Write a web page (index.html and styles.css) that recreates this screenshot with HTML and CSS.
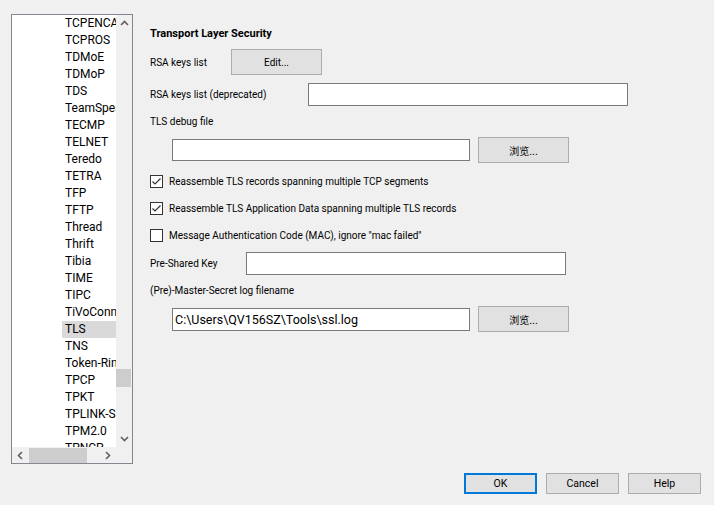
FILE: index.html
```html
<!DOCTYPE html>
<html>
<head>
<meta charset="utf-8">
<link rel="stylesheet" href="styles.css">
</head>
<body>
<div class="page">
  <div class="main">
    <div class="tree">
      <div class="tree-top">
        <div class="list">
          <div class="item">TCPENCAP</div>
          <div class="item">TCPROS</div>
          <div class="item">TDMoE</div>
          <div class="item">TDMoP</div>
          <div class="item">TDS</div>
          <div class="item">TeamSpeak2</div>
          <div class="item">TECMP</div>
          <div class="item">TELNET</div>
          <div class="item">Teredo</div>
          <div class="item">TETRA</div>
          <div class="item">TFP</div>
          <div class="item">TFTP</div>
          <div class="item">Thread</div>
          <div class="item">Thrift</div>
          <div class="item">Tibia</div>
          <div class="item">TIME</div>
          <div class="item">TIPC</div>
          <div class="item">TiVoConnect</div>
          <div class="item selected">TLS</div>
          <div class="item">TNS</div>
          <div class="item">Token-Ring</div>
          <div class="item">TPCP</div>
          <div class="item">TPKT</div>
          <div class="item">TPLINK-SMARTHOME</div>
          <div class="item">TPM2.0</div>
          <div class="item">TPNCP</div>
        </div>
        <div class="vscroll">
          <div class="sbtn"><svg width="9" height="6" viewBox="0 0 9 6"><polyline points="1,5 4.5,1.5 8,5" fill="none" stroke="#606060" stroke-width="1.6"/></svg></div>
          <div class="vtrack"><div class="vthumb"></div></div>
          <div class="sbtn"><svg width="9" height="6" viewBox="0 0 9 6"><polyline points="1,1 4.5,4.5 8,1" fill="none" stroke="#606060" stroke-width="1.6"/></svg></div>
        </div>
      </div>
      <div class="tree-bottom">
        <div class="hscroll">
          <div class="sbtn"><svg width="6" height="9" viewBox="0 0 6 9"><polyline points="5,1 1.5,4.5 5,8" fill="none" stroke="#606060" stroke-width="1.6"/></svg></div>
          <div class="htrack"><div class="hthumb"></div></div>
          <div class="sbtn"><svg width="6" height="9" viewBox="0 0 6 9"><polyline points="1,1 4.5,4.5 1,8" fill="none" stroke="#606060" stroke-width="1.6"/></svg></div>
        </div>
        <div class="corner"></div>
      </div>
    </div>

    <div class="panel">
      <div class="title">Transport Layer Security</div>
      <div class="row r-rsa">
        <span class="lbl w-rsa">RSA keys list</span>
        <button class="btn b-edit">Edit...</button>
      </div>
      <div class="row r-dep">
        <span class="lbl w-dep">RSA keys list (deprecated)</span>
        <div class="input i-wide"></div>
      </div>
      <div class="lbl-row r-dbg-l">TLS debug file</div>
      <div class="row r-file r-dbg">
        <div class="input i-file"></div>
        <button class="btn b-browse">浏览...</button>
      </div>
      <div class="check r-cb1">
        <span class="box"><svg width="11" height="11" viewBox="0 0 11 11"><polyline points="1.5,5.5 4,8 9.5,2.5" fill="none" stroke="#333" stroke-width="1.2"/></svg></span>
        <span class="ctext">Reassemble TLS records spanning multiple TCP segments</span>
      </div>
      <div class="check r-cb">
        <span class="box"><svg width="11" height="11" viewBox="0 0 11 11"><polyline points="1.5,5.5 4,8 9.5,2.5" fill="none" stroke="#333" stroke-width="1.2"/></svg></span>
        <span class="ctext">Reassemble TLS Application Data spanning multiple TLS records</span>
      </div>
      <div class="check r-cb">
        <span class="box"></span>
        <span class="ctext">Message Authentication Code (MAC), ignore "mac failed"</span>
      </div>
      <div class="row r-psk">
        <span class="lbl w-psk">Pre-Shared Key</span>
        <div class="input i-wide"></div>
      </div>
      <div class="lbl-row r-ms-l">(Pre)-Master-Secret log filename</div>
      <div class="row r-file r-ms">
        <div class="input i-file"><span class="itext">C:\Users\QV156SZ\Tools\ssl.log</span></div>
        <button class="btn b-browse">浏览...</button>
      </div>
    </div>
  </div>

  <div class="footer">
    <button class="btn fbtn default">OK</button>
    <button class="btn fbtn">Cancel</button>
    <button class="btn fbtn">Help</button>
  </div>
</div>
</body>
</html>
```

FILE: styles.css
```css
* { box-sizing: border-box; }
html, body {
  margin: 0;
  padding: 0;
  background: #f0f0f0;
  width: 714px;
  height: 505px;
  overflow: hidden;
  font-family: "Segoe UI", Roboto, "Liberation Sans", "Noto Sans CJK SC", sans-serif;
  color: #000;
}
.page { display: flex; flex-direction: column; }
.main { display: flex; }

/* tree list */
.tree {
  margin: 14px 0 0 11px;
  width: 122px;
  height: 450px;
  border: 1px solid #828790;
  display: flex;
  flex-direction: column;
  background: #fff;
}
.tree-top { display: flex; height: 432px; }
.list {
  width: 104px;
  height: 432px;
  overflow: hidden;
  background: #fff;
}
.item {
  margin-left: 50px;
  padding-left: 3px;
  height: 17px;
  line-height: 17px;
  font-size: 12px;
  white-space: nowrap;
  overflow: hidden;
}
.item.selected { background: #d9d9d9; }
.vscroll {
  width: 16px;
  background: #f0f0f0;
  display: flex;
  flex-direction: column;
}
.sbtn {
  width: 16px;
  height: 16px;
  display: flex;
  align-items: center;
  justify-content: center;
  flex: none;
}
.vtrack { flex: 1; }
.vthumb {
  margin-top: 338px;
  width: 15px;
  height: 18px;
  background: #cdcdcd;
}
.tree-bottom { display: flex; height: 16px; }
.hscroll {
  width: 104px;
  display: flex;
  background: #f0f0f0;
}
.htrack { flex: 1; display: flex; align-items: center; }
.hthumb {
  margin-left: 1px;
  width: 58px;
  height: 15px;
  background: #cdcdcd;
}
.corner { width: 16px; background: #f0f0f0; }

/* right panel */
.panel {
  margin-left: 17px;
  padding-top: 27px;
  display: flex;
  flex-direction: column;
  font-size: 10px;
}
.title {
  font-weight: bold;
  font-size: 11px;
  height: 14px;
  line-height: 14px;
}
.row { display: flex; align-items: center; }
.lbl { flex: none; }
.w-rsa { width: 81px; }
.w-dep { width: 158px; }
.w-psk { width: 96px; }
.r-rsa { margin-top: 8px; height: 26px; }
.r-dep { margin-top: 8px; height: 23px; }
.lbl-row { height: 14px; line-height: 14px; }
.r-dbg-l { margin-top: 9px; }
.r-file { padding-left: 22px; height: 26px; }
.r-dbg { margin-top: 8px; }
.r-psk { margin-top: 10px; height: 23px; }
.r-ms-l { margin-top: 9px; }
.r-ms { margin-top: 8px; }

.input {
  background: #fff;
  border: 1px solid #7a7a7a;
  height: 23px;
  display: flex;
  align-items: center;
}
.i-wide { width: 320px; }
.i-file { width: 298px; height: 22px; }
.r-ms .i-file { height: 23px; }
.itext { padding-left: 2px; font-size: 12.5px; white-space: nowrap; }

.btn {
  font-family: inherit;
  font-size: 10px;
  color: #000;
  background: #e1e1e1;
  border: 1px solid #adadad;
  padding: 0;
  margin: 0;
  height: 26px;
}
.b-edit { width: 91px; }
.b-browse { width: 91px; margin-left: 8px; font-family: "Noto Sans CJK SC", sans-serif; }

.check { display: flex; align-items: center; height: 13px; }
.r-cb1 { margin-top: 12px; }
.r-cb { margin-top: 14px; }
.box {
  width: 13px;
  height: 13px;
  border: 1px solid #333;
  background: #fff;
  display: flex;
  align-items: center;
  justify-content: center;
  flex: none;
}
.ctext { margin-left: 6px; white-space: nowrap; }

/* footer */
.footer {
  margin-top: 9px;
  display: flex;
  justify-content: flex-end;
  gap: 9px;
  padding-right: 13px;
}
.fbtn { width: 73px; height: 21px; font-size: 10.5px; }
.fbtn.default { border: 2px solid #0078d7; }
```
